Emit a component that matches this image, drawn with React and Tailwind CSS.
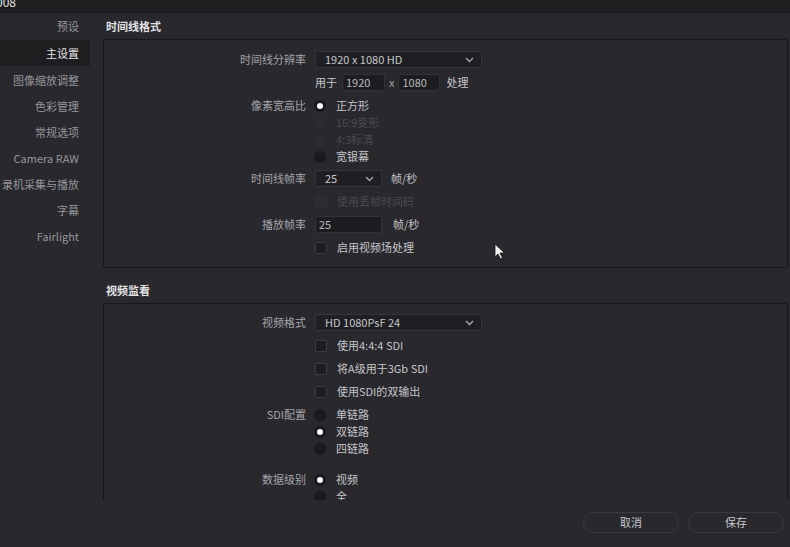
import React from "react";

const font = { fontFamily: '"Noto Sans CJK SC", "Noto Sans", sans-serif' };

const sideItems = ["预设", "主设置", "图像缩放调整", "色彩管理", "常规选项", "Camera RAW", "录机采集与播放", "字幕", "Fairlight"];

function Chevron() {
    return (
        <svg width="9" height="6" viewBox="0 0 9 6" className="shrink-0">
            <path d="M1 1l3.5 3.5L8 1" fill="none" stroke="#a8a8ad" strokeWidth="1.3" />
        </svg>
    );
}

function Select({ value, width }) {
    return (
        <div className={`h-[17px] ${width} flex items-center justify-between pl-[9px] pr-[7px] rounded-[2px] bg-[#1f1f23] border border-[#34343a] text-[#c6c6ca]`}>
            <span>{value}</span>
            <Chevron />
        </div>
    );
}

function Input({ value, width }) {
    return (
        <div className={`h-[17px] ${width} flex items-center pl-[3px] rounded-[2px] bg-[#1d1d21] border border-[#323237] text-[#b8b8bc]`}>
            {value}
        </div>
    );
}

function Radio({ checked, disabled }) {
    return (
        <span
            className={`w-[12px] h-[12px] rounded-full flex items-center justify-center shrink-0 ${
                disabled ? "bg-[#2c2c31]" : "bg-[#1a1a1e]"
            }`}
        >
            {checked && <span className="w-[6px] h-[6px] rounded-full bg-white" />}
        </span>
    );
}

function Check({ disabled }) {
    return (
        <span
            className={`w-[12px] h-[12px] rounded-[1px] shrink-0 border ${
                disabled ? "bg-[#2c2c31] border-[#2e2e33]" : "bg-[#1d1d21] border-[#3a3a40]"
            }`}
        />
    );
}

function Row({ label, h = "h-[23px]", mt = "", children }) {
    return (
        <div className={`flex items-center ${h} ${mt}`}>
            <div className="w-[203px] pr-[1px] text-right text-[#a4a4a9]">{label}</div>
            <div className="ml-[8px] flex items-center">{children}</div>
        </div>
    );
}

function RadioRow({ label, text, checked, disabled, mt }) {
    return (
        <Row label={label} h="h-[17px]" mt={mt}>
            <span className="ml-[-1px]">
                <Radio checked={checked} disabled={disabled} />
            </span>
            <span className={`ml-[10px] ${disabled ? "text-[#4a4a50]" : "text-[#c4c4c8]"}`}>{text}</span>
        </Row>
    );
}

function CheckRow({ text, disabled }) {
    return (
        <Row label="">
            <Check disabled={disabled} />
            <span className={`ml-[10px] ${disabled ? "text-[#4a4a50]" : "text-[#c4c4c8]"}`}>{text}</span>
        </Row>
    );
}

export default function App() {
    return (
        <div className="w-[790px] h-[547px] bg-[#28282d] flex flex-col overflow-hidden text-[11px] relative" style={font}>
            {/* title bar */}
            <div className="h-[13px] bg-[#1e1e21] border-b border-[#161618] overflow-hidden shrink-0">
                <div className="text-[12px] leading-[12px] -mt-[4px] text-[#e0e0e0] -ml-[4px]">008</div>
            </div>

            <div className="flex flex-1 min-h-0">
                {/* sidebar */}
                <div className="w-[90px] shrink-0 flex flex-col">
                    {sideItems.map((s, i) => (
                        <div
                            key={s}
                            className={`h-[26px] flex items-center justify-end pr-[11px] text-[11px] ${
                                i === 1 ? "bg-[#1e1e21] text-[#e4e4e6] my-[1px] h-[24px]" : "text-[#96969b]"
                            } ${i === 0 ? "text-[#8a8a8f]" : ""}`}
                        >
                            {s}
                        </div>
                    ))}
                </div>

                {/* main */}
                <div className="flex-1 flex flex-col min-w-0">
                    <div className="h-[487px] overflow-hidden pl-[13px] pr-[2px] shrink-0">
                        <div className="h-[26px] flex items-center pl-[3px] text-[#e2e2e4] font-bold">时间线格式</div>
                        <div className="h-[229px] border border-[#18181b] rounded-[2px] pt-[8px]">
                            <Row label="时间线分辨率">
                                <Select value="1920 x 1080 HD" width="w-[167px]" />
                            </Row>
                            <Row label="">
                                <span className="text-[#c4c4c8]">用于</span>
                                <span className="ml-[5px]"><Input value="1920" width="w-[43px]" /></span>
                                <span className="mx-[4px] text-[#a4a4a9]">x</span>
                                <Input value="1080" width="w-[42px]" />
                                <span className="ml-[6px] text-[#c4c4c8]">处理</span>
                            </Row>
                            <RadioRow label="像素宽高比" text="正方形" checked mt="mt-[3px]" />
                            <RadioRow label="" text="16:9变形" disabled />
                            <RadioRow label="" text="4:3标清" disabled />
                            <RadioRow label="" text="宽银幕" />
                            <Row label="时间线帧率" mt="mt-[2px]">
                                <Select value="25" width="w-[67px]" />
                                <span className="ml-[9px] text-[#c4c4c8]">帧/秒</span>
                            </Row>
                            <CheckRow text="使用丢帧时间码" disabled />
                            <Row label="播放帧率">
                                <Input value="25" width="w-[67px]" />
                                <span className="ml-[11px] text-[#c4c4c8]">帧/秒</span>
                            </Row>
                            <CheckRow text="启用视频场处理" />
                        </div>

                        <div className="h-[26px] mt-[9px] flex items-center pl-[3px] text-[#e2e2e4] font-bold">视频监看</div>
                        <div className="h-[260px] border border-[#18181b] rounded-[2px] pt-[7px]">
                            <Row label="视频格式">
                                <Select value="HD 1080PsF 24" width="w-[167px]" />
                            </Row>
                            <CheckRow text="使用4:4:4 SDI" />
                            <CheckRow text="将A级用于3Gb SDI" />
                            <CheckRow text="使用SDI的双输出" />
                            <RadioRow label="SDI配置" text="单链路" mt="mt-[3px]" />
                            <RadioRow label="" text="双链路" checked />
                            <RadioRow label="" text="四链路" />
                            <RadioRow label="数据级别" text="视频" checked mt="mt-[14px]" />
                            <RadioRow label="" text="全" />
                        </div>
                    </div>

                    {/* footer */}
                    <div className="flex-1 flex items-start justify-end pr-[6px] pt-[12px] gap-[9px]">
                        <button className="w-[96px] h-[21px] rounded-full border border-[#3a3a40] text-[#c8c8cc] text-[11px]">取消</button>
                        <button className="w-[96px] h-[21px] rounded-full border border-[#3a3a40] text-[#c8c8cc] text-[11px]">保存</button>
                    </div>
                </div>
            </div>

            {/* mouse cursor */}
            <svg className="absolute left-[494px] top-[243px]" width="11" height="17" viewBox="0 0 11 17">
                <path d="M1 1v13l3-3 2.5 5 2-1-2.5-5h4.5z" fill="#f4f4f4" stroke="#111" strokeWidth="0.8" />
            </svg>
        </div>
    );
}
